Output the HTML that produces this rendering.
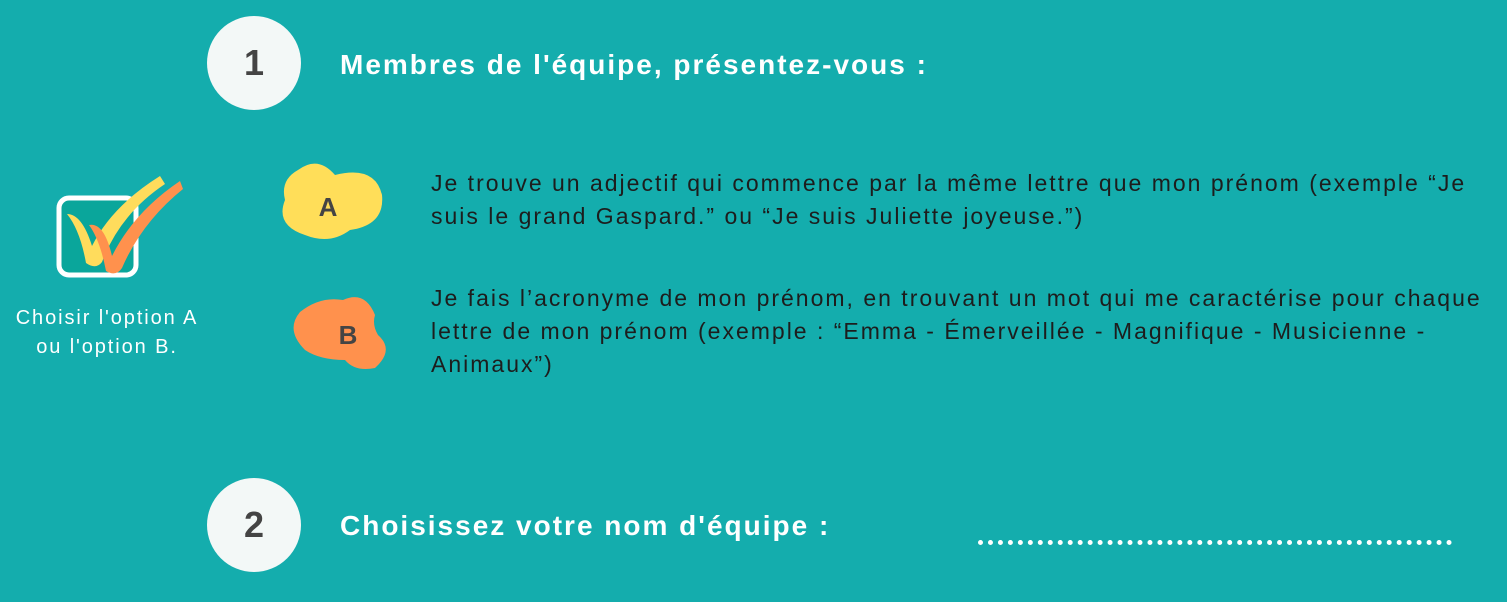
<!DOCTYPE html>
<html><head><meta charset="utf-8"><style>
body{margin:0;width:1507px;height:602px;background:#14adad;position:relative;overflow:hidden;font-family:"Liberation Sans",sans-serif;color:#fff}
.c{position:absolute;width:94px;height:94px;border-radius:50%;background:#f3f8f7;color:#444;font-weight:bold;font-size:36px;text-align:center;line-height:94px}
.h{position:absolute;font-weight:bold;font-size:28px;color:#fff;letter-spacing:2px}
.p{position:absolute;left:431px;font-size:23px;line-height:33px;color:#1d1d1d;width:1090px;letter-spacing:2px;white-space:nowrap}
.cap{position:absolute;left:0;width:214px;text-align:center;top:304px;font-size:20px;line-height:29px;letter-spacing:1.9px}
</style></head><body>
<div class="c" style="left:207px;top:16px">1</div>
<div class="h" style="left:340px;top:49px">Membres de l'équipe, présentez-vous :</div>
<div class="c" style="left:207px;top:478px">2</div>
<div class="h" style="left:340px;top:510px">Choisissez votre nom d'équipe :</div>
<div style="position:absolute;left:978px;top:540px;width:474px;border-bottom:5px dotted #fff"></div>

<svg style="position:absolute;left:0;top:0" width="420" height="400">
<rect x="59" y="198" width="77" height="77" rx="10" fill="#0aa69b" stroke="#fff" stroke-width="5"/>
<path d="M67 214 Q82 214 92 246 Q112 206 160 176 L165 184 Q120 214 102 262 Q96 270 86 263 Q80 230 67 214Z" fill="#ffdc5c"/>
<path d="M89 225 Q104 222 112 256 Q134 212 180 181 L183 189 Q142 222 122 268 Q116 277 106 271 Q100 240 89 225Z" fill="#ff914d"/>
<path d="M298 170 Q318 155 335 175 Q375 165 382 195 Q385 225 350 230 Q330 245 305 235 Q275 225 285 200 Q280 180 298 170Z" fill="#ffde59"/>
<path d="M300 312 Q320 296 343 300 Q365 290 375 315 Q372 325 378 335 Q395 350 375 368 Q355 372 345 360 Q320 360 305 350 Q285 330 300 312Z" fill="#ff914d"/>
<text x="328" y="216" font-family="Liberation Sans" font-weight="bold" font-size="26" fill="#444" text-anchor="middle">A</text>
<text x="348" y="344" font-family="Liberation Sans" font-weight="bold" font-size="26" fill="#444" text-anchor="middle">B</text>
</svg>
<div class="cap">Choisir l'option A<br>ou l'option B.</div>
<div class="p" style="top:167px">Je trouve un adjectif qui commence par la même lettre que mon prénom (exemple “Je<br>suis le grand Gaspard.” ou “Je suis Juliette joyeuse.”)</div>
<div class="p" style="top:282px">Je fais l’acronyme de mon prénom, en trouvant un mot qui me caractérise pour chaque<br>lettre de mon prénom (exemple : “Emma - Émerveillée - Magnifique - Musicienne -<br>Animaux”)</div>
</body></html>
